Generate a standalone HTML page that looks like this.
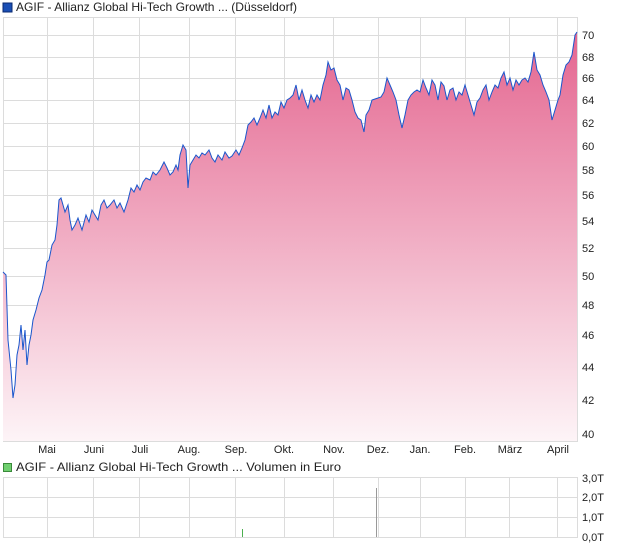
<!DOCTYPE html>
<html><head><meta charset="utf-8"><style>
body{margin:0;background:#fff;width:620px;height:546px;overflow:hidden;font-family:"Liberation Sans",Arial,sans-serif;}
svg text{font-family:"Liberation Sans",Arial,sans-serif;font-size:11px;fill:#222}
</style></head><body>
<svg width="620" height="546" viewBox="0 0 620 546">
<defs><linearGradient id="g" gradientUnits="userSpaceOnUse" x1="0" y1="30" x2="0" y2="441">
<stop offset="0" stop-color="#e4658f"/><stop offset="1" stop-color="#fdf4f7"/></linearGradient></defs>
<rect x="3" y="3" width="9" height="9" fill="#1a4fb5" stroke="#0a2a70" stroke-width="1"/>
<text x="16" y="11" style="font-size:12px" textLength="281" lengthAdjust="spacingAndGlyphs">AGIF - Allianz Global Hi-Tech Growth ... (Düsseldorf)</text>
<g stroke="#dcdcdc" stroke-width="1">
<rect x="3.5" y="17.5" width="574" height="424" fill="none"/>
<line x1="3" y1="35.5" x2="577" y2="35.5"/><line x1="3" y1="57.5" x2="577" y2="57.5"/><line x1="3" y1="78.5" x2="577" y2="78.5"/><line x1="3" y1="100.5" x2="577" y2="100.5"/><line x1="3" y1="123.5" x2="577" y2="123.5"/><line x1="3" y1="146.5" x2="577" y2="146.5"/><line x1="3" y1="170.5" x2="577" y2="170.5"/><line x1="3" y1="195.5" x2="577" y2="195.5"/><line x1="3" y1="221.5" x2="577" y2="221.5"/><line x1="3" y1="248.5" x2="577" y2="248.5"/><line x1="3" y1="276.5" x2="577" y2="276.5"/><line x1="3" y1="305.5" x2="577" y2="305.5"/><line x1="3" y1="335.5" x2="577" y2="335.5"/><line x1="3" y1="367.5" x2="577" y2="367.5"/><line x1="3" y1="400.5" x2="577" y2="400.5"/><line x1="3" y1="434.5" x2="577" y2="434.5"/>
<line x1="47.5" y1="17" x2="47.5" y2="441"/><line x1="93.5" y1="17" x2="93.5" y2="441"/><line x1="139.5" y1="17" x2="139.5" y2="441"/><line x1="189.5" y1="17" x2="189.5" y2="441"/><line x1="235.5" y1="17" x2="235.5" y2="441"/><line x1="284.5" y1="17" x2="284.5" y2="441"/><line x1="333.5" y1="17" x2="333.5" y2="441"/><line x1="378.5" y1="17" x2="378.5" y2="441"/><line x1="420.5" y1="17" x2="420.5" y2="441"/><line x1="465.5" y1="17" x2="465.5" y2="441"/><line x1="509.5" y1="17" x2="509.5" y2="441"/><line x1="557.5" y1="17" x2="557.5" y2="441"/>
</g>
<polygon fill="url(#g)" points="3,441 3,272 6,275 8,340 11,370 13,398 15,385 17,355 19,345 21,325 23,350 25,330 27,365 29,345 31,335 33,320 36,310 39,298 42,290 45,275 47,262 49,260 52,245 55,240 57,225 59,200 61,198 63,205 65,212 68,205 70,220 72,230 75,225 78,218 82,230 86,215 89,222 92,210 95,215 98,220 101,205 104,200 107,208 110,205 114,200 117,208 120,203 124,212 128,200 131,188 134,192 137,185 140,190 143,182 146,178 150,180 153,172 156,175 160,170 164,162 167,168 170,175 173,172 176,165 178,170 180,155 183,145 186,150 188,188 190,165 193,160 196,155 199,158 202,153 205,155 209,150 212,158 215,162 218,155 222,160 225,152 229,158 232,156 236,150 239,155 242,148 245,140 248,125 251,122 254,118 257,125 260,118 263,110 266,118 269,105 272,118 275,112 278,115 281,102 284,108 287,100 290,98 293,95 296,85 299,100 302,90 305,100 308,108 311,95 314,102 317,95 320,100 323,85 326,75 328,62 331,70 334,68 337,80 340,85 343,100 346,88 349,90 352,100 355,112 358,118 361,120 364,132 366,115 369,110 372,100 375,99 378,98 381,97 384,92 387,78 390,85 393,92 396,100 399,115 402,128 405,115 408,100 411,95 414,92 417,90 420,92 423,80 426,88 429,95 432,80 435,85 438,100 441,82 444,86 447,100 450,90 453,88 456,100 459,92 462,95 465,85 468,95 471,105 474,115 477,102 480,98 483,90 486,85 489,100 492,92 495,85 498,88 501,78 504,72 507,85 510,78 513,90 516,80 519,85 522,80 525,78 528,82 531,72 534,52 537,70 540,75 543,85 546,92 549,100 552,120 555,110 558,100 560,95 563,75 566,65 569,62 572,55 575,35 577,32 577,441"/>
<polyline fill="none" stroke="#1a56cc" stroke-width="1" points="3,272 6,275 8,340 11,370 13,398 15,385 17,355 19,345 21,325 23,350 25,330 27,365 29,345 31,335 33,320 36,310 39,298 42,290 45,275 47,262 49,260 52,245 55,240 57,225 59,200 61,198 63,205 65,212 68,205 70,220 72,230 75,225 78,218 82,230 86,215 89,222 92,210 95,215 98,220 101,205 104,200 107,208 110,205 114,200 117,208 120,203 124,212 128,200 131,188 134,192 137,185 140,190 143,182 146,178 150,180 153,172 156,175 160,170 164,162 167,168 170,175 173,172 176,165 178,170 180,155 183,145 186,150 188,188 190,165 193,160 196,155 199,158 202,153 205,155 209,150 212,158 215,162 218,155 222,160 225,152 229,158 232,156 236,150 239,155 242,148 245,140 248,125 251,122 254,118 257,125 260,118 263,110 266,118 269,105 272,118 275,112 278,115 281,102 284,108 287,100 290,98 293,95 296,85 299,100 302,90 305,100 308,108 311,95 314,102 317,95 320,100 323,85 326,75 328,62 331,70 334,68 337,80 340,85 343,100 346,88 349,90 352,100 355,112 358,118 361,120 364,132 366,115 369,110 372,100 375,99 378,98 381,97 384,92 387,78 390,85 393,92 396,100 399,115 402,128 405,115 408,100 411,95 414,92 417,90 420,92 423,80 426,88 429,95 432,80 435,85 438,100 441,82 444,86 447,100 450,90 453,88 456,100 459,92 462,95 465,85 468,95 471,105 474,115 477,102 480,98 483,90 486,85 489,100 492,92 495,85 498,88 501,78 504,72 507,85 510,78 513,90 516,80 519,85 522,80 525,78 528,82 531,72 534,52 537,70 540,75 543,85 546,92 549,100 552,120 555,110 558,100 560,95 563,75 566,65 569,62 572,55 575,35 577,32"/>
<g>
<text x="582" y="39">70</text><text x="582" y="61">68</text><text x="582" y="82">66</text><text x="582" y="104">64</text><text x="582" y="127">62</text><text x="582" y="150">60</text><text x="582" y="174">58</text><text x="582" y="199">56</text><text x="582" y="225">54</text><text x="582" y="252">52</text><text x="582" y="280">50</text><text x="582" y="309">48</text><text x="582" y="339">46</text><text x="582" y="371">44</text><text x="582" y="404">42</text><text x="582" y="438">40</text>
</g>
<g text-anchor="middle">
<text x="47" y="453">Mai</text><text x="94" y="453">Juni</text><text x="140" y="453">Juli</text><text x="189" y="453">Aug.</text><text x="236" y="453">Sep.</text><text x="284" y="453">Okt.</text><text x="334" y="453">Nov.</text><text x="378" y="453">Dez.</text><text x="420" y="453">Jan.</text><text x="465" y="453">Feb.</text><text x="510" y="453">März</text><text x="558" y="453">April</text>
</g>
<rect x="3.5" y="463.5" width="8" height="8" fill="#6fcf6f" stroke="#3a8a3a"/>
<text x="16" y="471" style="font-size:12px" textLength="325" lengthAdjust="spacingAndGlyphs">AGIF - Allianz Global Hi-Tech Growth ... Volumen in Euro</text>
<g stroke="#dcdcdc" stroke-width="1">
<rect x="3.5" y="477.5" width="574" height="60" fill="none"/>
<line x1="3" y1="497.5" x2="577" y2="497.5"/><line x1="3" y1="517.5" x2="577" y2="517.5"/>
<line x1="47.5" y1="477" x2="47.5" y2="537"/><line x1="93.5" y1="477" x2="93.5" y2="537"/><line x1="139.5" y1="477" x2="139.5" y2="537"/><line x1="189.5" y1="477" x2="189.5" y2="537"/><line x1="235.5" y1="477" x2="235.5" y2="537"/><line x1="284.5" y1="477" x2="284.5" y2="537"/><line x1="333.5" y1="477" x2="333.5" y2="537"/><line x1="378.5" y1="477" x2="378.5" y2="537"/><line x1="420.5" y1="477" x2="420.5" y2="537"/><line x1="465.5" y1="477" x2="465.5" y2="537"/><line x1="509.5" y1="477" x2="509.5" y2="537"/><line x1="557.5" y1="477" x2="557.5" y2="537"/>
</g>
<line x1="242.5" y1="529" x2="242.5" y2="537" stroke="#4caf50"/>
<line x1="376.5" y1="488" x2="376.5" y2="537" stroke="#999"/>
<text x="582" y="482">3,0T</text><text x="582" y="501">2,0T</text><text x="582" y="521">1,0T</text><text x="582" y="541">0,0T</text>
</svg>
</body></html>
